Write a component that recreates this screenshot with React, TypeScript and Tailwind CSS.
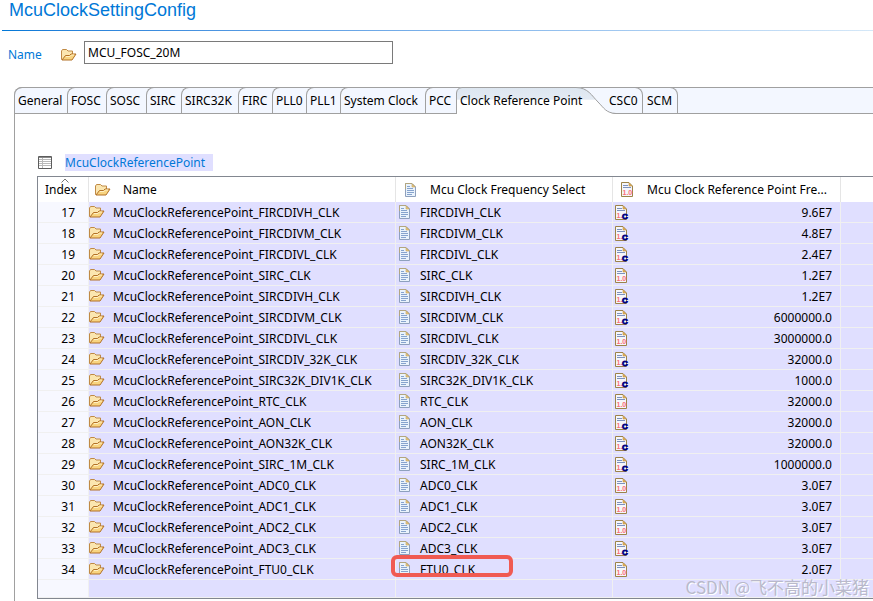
import React from 'react';
import clsx from 'clsx';

interface ClockRow {
  index: number;
  name: string;
  select: string;
  frequency: string;
  calculated: boolean;
}

const makeRow = (index: number, name: string, frequency: string, calculated: boolean): ClockRow => ({
  index,
  name: `McuClockReferencePoint_${name}_CLK`,
  select: `${name}_CLK`,
  frequency,
  calculated,
});

const ROWS: ClockRow[] = [
  makeRow(17, 'FIRCDIVH', '9.6E7', true),
  makeRow(18, 'FIRCDIVM', '4.8E7', true),
  makeRow(19, 'FIRCDIVL', '2.4E7', true),
  makeRow(20, 'SIRC', '1.2E7', false),
  makeRow(21, 'SIRCDIVH', '1.2E7', true),
  makeRow(22, 'SIRCDIVM', '6000000.0', true),
  makeRow(23, 'SIRCDIVL', '3000000.0', false),
  makeRow(24, 'SIRCDIV_32K', '32000.0', true),
  makeRow(25, 'SIRC32K_DIV1K', '1000.0', true),
  makeRow(26, 'RTC', '32000.0', false),
  makeRow(27, 'AON', '32000.0', true),
  makeRow(28, 'AON32K', '32000.0', true),
  makeRow(29, 'SIRC_1M', '1000000.0', true),
  makeRow(30, 'ADC0', '3.0E7', false),
  makeRow(31, 'ADC1', '3.0E7', false),
  makeRow(32, 'ADC2', '3.0E7', false),
  makeRow(33, 'ADC3', '3.0E7', true),
  makeRow(34, 'FTU0', '2.0E7', false),
];

const TABS = [
  { label: 'General', width: 'w-[53px]' },
  { label: 'FOSC', width: 'w-[39px]' },
  { label: 'SOSC', width: 'w-[40px]' },
  { label: 'SIRC', width: 'w-[35px]' },
  { label: 'SIRC32K', width: 'w-[57px]' },
  { label: 'FIRC', width: 'w-[34px]' },
  { label: 'PLL0', width: 'w-[34px]' },
  { label: 'PLL1', width: 'w-[34px]' },
  { label: 'System Clock', width: 'w-[85px]' },
  { label: 'PCC', width: 'w-[31px]' },
];

const FolderIcon: React.FC = () => (
  <svg width="16" height="12" viewBox="0 0 16 12" className="shrink-0" aria-hidden="true">
    <path d="M1 11L.5 10V2L1.5 .5h4L7 2h4.5v3" fill="#fbe6b0" stroke="#c08a45" />
    <path d="M1 11L4.5 6.5H8.5L10 5h5L11 11z" fill="#f8d480" stroke="#b27127" strokeLinejoin="round" />
    <path d="M5 7.5h4L10.5 6H13" fill="none" stroke="#fff0c4" />
  </svg>
);

const DocIcon: React.FC = () => (
  <svg width="11" height="14" viewBox="0 0 11 14" className="shrink-0" aria-hidden="true">
    <path d="M.5.5H7L10.5 4v9.5H.5z" fill="#eaf3fc" stroke="#8ea0bd" />
    <path d="M.5 6V.5H7L10.5 4" fill="none" stroke="#b3a67e" />
    <path d="M7 1v3h3z" fill="#e6c884" stroke="#c9a65c" strokeWidth=".6" />
    <path d="M2 3.5h3M2 5.5h6M2 7.5h7M2 9.5h7M2 11.5h5" stroke="#86a3cd" />
  </svg>
);

const NumberIcon: React.FC<{ calculated?: boolean }> = ({ calculated }) => (
  <svg width="14" height="15" viewBox="0 0 14 15" className="shrink-0" aria-hidden="true">
    <path d="M.5.5H8L11.5 4v10.5H.5z" fill="#f5f6fb" stroke="#9c8348" />
    <path d="M8 1v3h3z" fill="#e3b45c" stroke="#c2913c" strokeWidth=".6" />
    <path d="M2 3.5h5M2 5.5h8" stroke="#7d92bd" />
    <text x="1.5" y="13" fontFamily="Liberation Sans" fontSize="7" fontWeight="bold" fill="#fb7078">
      {calculated ? '1.' : '1.0'}
    </text>
    {calculated && (
      <text x="7" y="14" fontFamily="Liberation Sans" fontSize="8" fontWeight="bold" fill="#000080" stroke="#000080" strokeWidth=".8">
        C
      </text>
    )}
  </svg>
);

const ListIcon: React.FC = () => (
  <svg width="14" height="13" viewBox="0 0 14 13" className="shrink-0" aria-hidden="true">
    <path d="M.5.5h13v12H.5z" fill="#fff" stroke="#5c5c5c" />
    <path d="M1 1.5h12" stroke="#8a8a8a" />
    <path d="M1 3.5h12M1 5.5h12M1 7.5h12M1 9.5h12M4.5 2v10" stroke="#b9b9b9" />
  </svg>
);

const TabBar: React.FC = () => (
  <div role="tablist" className="flex h-[27px] rounded-tl-lg border-t border-[#a0a0a0] bg-[#f3f7ff]">
    {TABS.map((tab) => (
      <button
        key={tab.label}
        role="tab"
        aria-selected={false}
        className={clsx(
          '-mt-px shrink-0 whitespace-nowrap rounded-tl-lg border-t border-b border-l border-[#a0a0a0] pl-[3px] text-left',
          tab.width,
        )}
      >
        {tab.label}
      </button>
    ))}
    <button role="tab" aria-selected className="relative -mt-px w-[150px] shrink-0 whitespace-nowrap pl-1 text-left">
      <svg width="160" height="27" viewBox="0 0 160 27" className="absolute top-0 left-0" aria-hidden="true">
        <defs>
          <linearGradient id="activeTab" x1="0" y1="0" x2="0" y2="1">
            <stop offset="0" stopColor="#dde6f0" />
            <stop offset=".46" stopColor="#e3eaf3" />
            <stop offset=".47" stopColor="#fff" />
          </linearGradient>
        </defs>
        <path d="M0 27V6Q1 1 6 0H120C132 0 136 9 142 15S150 26 160 27z" fill="url(#activeTab)" />
        <path d="M.5 27V6Q1 1 6 .5H120C132 .5 136 9 142 15S150 26 160 26.5" fill="none" stroke="#a0a0a0" />
      </svg>
      <span className="relative">Clock Reference Point</span>
    </button>
    <button
      role="tab"
      aria-selected={false}
      className="-mt-px w-[37px] shrink-0 rounded-tr-lg border-t border-r border-b border-[#a0a0a0] pl-[3px] text-left"
    >
      CSC0
    </button>
    <button
      role="tab"
      aria-selected={false}
      className="-mt-px w-[35px] shrink-0 rounded-tr-lg border-t border-r border-b border-[#a0a0a0] pl-1 text-left"
    >
      SCM
    </button>
    <div className="grow border-b border-[#a0a0a0]" />
  </div>
);

const ClockTable: React.FC = () => (
  <table className="w-full table-fixed border-separate border-spacing-0 bg-white">
    <colgroup>
      <col className="w-[51px]" />
      <col className="w-[307px]" />
      <col className="w-[217px]" />
      <col className="w-[228px]" />
      <col />
    </colgroup>
    <thead>
      <tr className="h-[25px] text-left [&>th]:border-r [&>th]:border-[#e5e5e5] [&>th]:p-0 [&>th]:font-normal [&>th:last-child]:border-r-0">
        <th className="relative">
          <svg width="8" height="5" viewBox="0 0 8 5" className="absolute top-px left-[23px]" aria-hidden="true">
            <path d="M.5 4.5L4 1l3.5 3.5" fill="none" stroke="#777" />
          </svg>
          <span className="pl-[7px]">Index</span>
        </th>
        <th>
          <div className="flex items-center gap-3 pl-1.5">
            <FolderIcon />
            Name
          </div>
        </th>
        <th>
          <div className="flex items-center gap-3.5 pl-[9px]">
            <DocIcon />
            Mcu Clock Frequency Select
          </div>
        </th>
        <th>
          <div className="flex items-center gap-3 pl-2">
            <NumberIcon />
            Mcu Clock Reference Point Fre...
          </div>
        </th>
        <th />
      </tr>
    </thead>
    <tbody className="[&_span]:pt-0.5 [&_td]:border-r [&_td]:border-b [&_td]:border-[#f0f0f0] [&_td]:bg-[#e0dfff] [&_td]:p-0 [&_td:first-child]:bg-[#f7f8ff] [&_td:last-child]:border-r-0">
      {ROWS.map((row) => (
        <tr key={row.index} className="h-[21px]">
          <td>
            <div className="flex justify-end pr-[13px]">
              <span>{row.index}</span>
            </div>
          </td>
          <td>
            <div className="flex items-center gap-2 whitespace-nowrap">
              <FolderIcon />
              <span>{row.name}</span>
            </div>
          </td>
          <td className="relative">
            <div className="flex items-center gap-2.5 pl-[3px]">
              <DocIcon />
              <span>{row.select}</span>
            </div>
            {row.index === 34 && (
              <div className="absolute -top-1 -left-[5px] z-10 h-[22px] w-[122px] rounded-md border-4 border-[#f05a52]" />
            )}
          </td>
          <td>
            <div className="flex items-center justify-between pr-2 pl-0.5">
              <NumberIcon calculated={row.calculated} />
              <span>{row.frequency}</span>
            </div>
          </td>
          <td />
        </tr>
      ))}
      <tr className="h-[18px]">
        <td />
        <td />
        <td />
        <td />
        <td />
      </tr>
    </tbody>
  </table>
);

export default function App() {
  return (
    <div className="relative flex min-h-screen flex-col overflow-hidden bg-white font-['Noto_Sans','Noto_Sans_CJK_SC',sans-serif] text-[12px] leading-4 text-black">
      <header className="ml-0.5">
        <h1 className="h-[30px] pl-[7px] font-['Liberation_Sans',sans-serif] text-[18px] leading-5 text-[#0078d7]">
          McuClockSettingConfig
        </h1>
        <div className="h-px bg-linear-to-r from-[#0078d7] to-[#d5e8f8]" />
      </header>

      <div className="mt-2.5 flex items-center pl-2">
        <label htmlFor="config-name" className="w-[53px] pt-1 text-[#0078d7]">
          Name
        </label>
        <div className="pt-1">
          <FolderIcon />
        </div>
        <input
          id="config-name"
          defaultValue="MCU_FOSC_20M"
          className="ml-[7px] h-[23px] w-[309px] border border-[#7a7a7a] bg-white px-[3px] outline-none"
        />
      </div>

      <main className="mt-[23px] ml-3.5 flex grow flex-col">
        <TabBar />
        <section className="grow border-l border-[#a0a0a0] pl-[22px]">
          <div className="flex items-center gap-[13px] pt-10 pl-px">
            <ListIcon />
            <h2 className="bg-[#e0dfff] pr-2 leading-[17px] text-[#0078d7]">McuClockReferencePoint</h2>
          </div>
          <div className="mt-[5px] border-y border-l border-[#828790]">
            <ClockTable />
          </div>
        </section>
      </main>

      <div className="absolute right-1 bottom-1 font-['Noto_Sans_CJK_SC',sans-serif] text-[17px] leading-5 text-[#b9b9cb] [text-shadow:1px_1px_0_#fff]">
        CSDN @飞不高的小菜猪
      </div>
    </div>
  );
}
